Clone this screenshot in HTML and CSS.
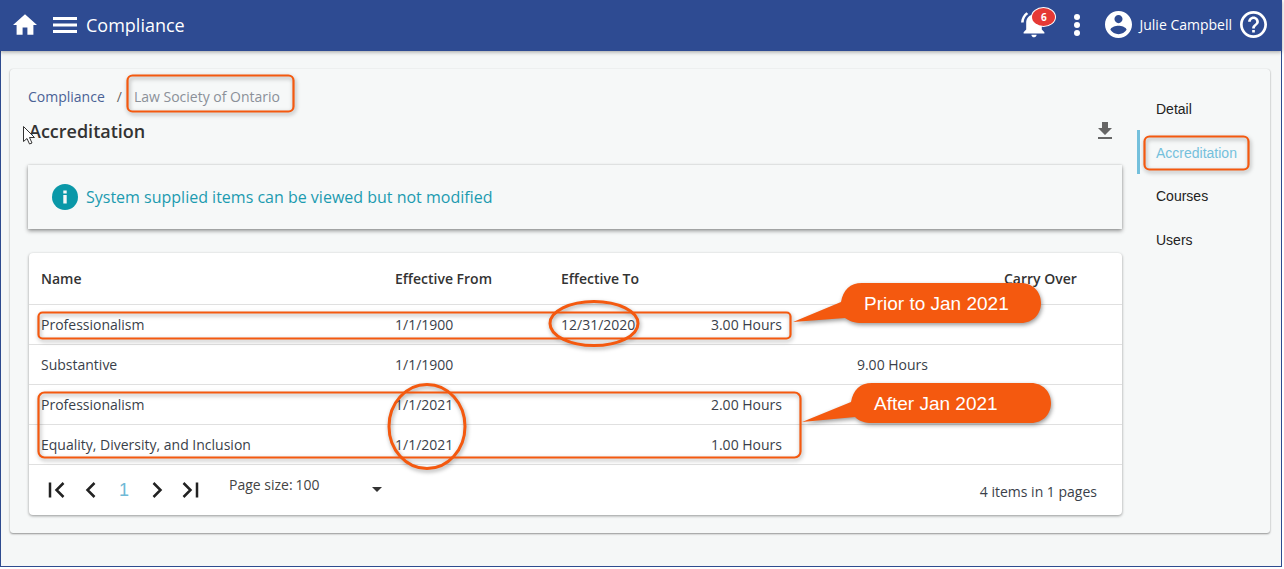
FILE: index.html
```html
<!DOCTYPE html>
<html lang="en">
<head>
<meta charset="utf-8">
<title>Compliance</title>
<link rel="stylesheet" href="styles.css">
</head>
<body>
<div class="window">
  <header class="topbar">
    <svg class="ico home" viewBox="2 1.500 20 17"><path d="M10 20v-6h4v6h5v-8h3L12 3 2 12h3v8z" transform="translate(0 -1.500)"/></svg>
    <svg class="ico menu" viewBox="0 0 24 16"><path d="M0 0h24v3H0zM0 6.500h24v3H0zM0 13h24v3H0z"/></svg>
    <span class="app-title">Compliance</span>
    <span class="spacer"></span>
    <div class="bell-wrap">
      <svg class="ico bell" viewBox="2 2.500 20 20"><path d="M7.580 4.080 6.150 2.650C3.750 4.480 2.170 7.300 2.030 10.500h2c.15-2.650 1.510-4.970 3.550-6.420zM19.970 10.500h2c-.15-3.200-1.730-6.020-4.120-7.850l-1.420 1.430c2.020 1.450 3.390 3.770 3.540 6.420zM18 11c0-3.070-1.640-5.640-4.500-6.320V4c0-.83-.67-1.500-1.500-1.500s-1.500.67-1.500 1.500v.68C7.630 5.360 6 7.920 6 11v5l-2 2v1h16v-1l-2-2v-5zm-6 11c.14 0 .27-.01.4-.04.65-.14 1.180-.58 1.440-1.180.1-.24.15-.5.15-.78h-4c.01 1.100.9 2 2.010 2z"/></svg>
      <span class="badge">6</span>
    </div>
    <svg class="ico kebab" viewBox="0 0 8 24"><circle cx="4" cy="4" r="3"/><circle cx="4" cy="12" r="3"/><circle cx="4" cy="20" r="3"/></svg>
    <svg class="ico avatar" viewBox="2 2 20 20"><path d="M12 2C6.480 2 2 6.480 2 12s4.480 10 10 10 10-4.480 10-10S17.520 2 12 2zm0 3c1.660 0 3 1.340 3 3s-1.340 3-3 3-3-1.340-3-3 1.340-3 3-3zm0 14.200c-2.500 0-4.710-1.280-6-3.220.03-1.990 4-3.080 6-3.080 1.990 0 5.970 1.090 6 3.080-1.290 1.940-3.500 3.220-6 3.220z"/></svg>
    <span class="user">Julie Campbell</span>
    <svg class="ico help" viewBox="2 2 20 20"><path d="M11 18h2v-2h-2v2zm1-16C6.480 2 2 6.480 2 12s4.480 10 10 10 10-4.480 10-10S17.520 2 12 2zm0 18c-4.410 0-8-3.590-8-8s3.590-8 8-8 8 3.590 8 8-3.590 8-8 8zm0-14c-2.210 0-4 1.790-4 4h2c0-1.100.9-2 2-2s2 .9 2 2c0 2-3 1.750-3 5h2c0-2.250 3-2.500 3-5 0-2.210-1.790-4-4-4z"/></svg>
  </header>

  <main class="card">
    <section class="content">
      <nav class="crumbs">
        <a class="crumb-link">Compliance</a>
        <span class="crumb-sep">/</span>
        <span class="crumb-current">Law Society of Ontario</span>
      </nav>
      <div class="title-row">
        <h1 class="page-title">Accreditation</h1>
        <svg class="download" viewBox="5 3 14 17"><path d="M19 9h-4V3H9v6H5l7 7 7-7zM5 18v2h14v-2H5z"/></svg>
      </div>
      <div class="alert">
        <svg class="info" viewBox="0 0 26 26"><circle cx="13" cy="13" r="13"/><path class="info-i" d="M11.300 11h3.400v8.500h-3.400zM11.300 6.500h3.400v3h-3.400z"/></svg>
        <span>System supplied items can be viewed but not modified</span>
      </div>
      <div class="table">
        <div class="row head">
          <div>Name</div><div>Effective From</div><div>Effective To</div><div></div><div></div><div class="carry">Carry Over</div>
        </div>
        <div class="row">
          <div>Professionalism</div><div>1/1/1900</div><div>12/31/2020</div><div class="num">3.00 Hours</div><div></div><div></div>
        </div>
        <div class="row">
          <div>Substantive</div><div>1/1/1900</div><div></div><div></div><div class="num">9.00 Hours</div><div></div>
        </div>
        <div class="row">
          <div>Professionalism</div><div>1/1/2021</div><div></div><div class="num">2.00 Hours</div><div></div><div></div>
        </div>
        <div class="row">
          <div>Equality, Diversity, and Inclusion</div><div>1/1/2021</div><div></div><div class="num">1.00 Hours</div><div></div><div></div>
        </div>
        <div class="pager">
          <svg class="pg pg-wide" viewBox="0 0 18 18"><path d="M2 1.500v15M15.500 2l-7 7 7 7"/></svg>
          <svg class="pg pg-prev" viewBox="0 0 11 18"><path d="M9.500 2l-7 7 7 7"/></svg>
          <span class="pg-num">1</span>
          <svg class="pg pg-next" viewBox="0 0 11 18"><path d="M1.500 2l7 7-7 7"/></svg>
          <svg class="pg pg-wide" viewBox="0 0 18 18"><path d="M2.500 2l7 7-7 7M16 1.500v15"/></svg>
          <div class="size">
            <span class="size-label">Page size:</span>
            <span class="size-val">100</span>
            <span class="caret"></span>
          </div>
          <span class="count">4 items in 1 pages</span>
        </div>
      </div>
    </section>
    <nav class="side">
      <a class="side-item">Detail</a>
      <a class="side-item active">Accreditation</a>
      <a class="side-item">Courses</a>
      <a class="side-item">Users</a>
    </nav>
  </main>
</div>

<svg class="overlay" viewBox="0 0 1284 569" width="1284" height="569">
  <g class="marks">
    <rect x="127.500" y="75.500" width="166" height="36" rx="5"/>
    <rect x="1144.500" y="136.500" width="104" height="33" rx="5"/>
    <rect x="38.500" y="312.500" width="752" height="26" rx="4"/>
    <rect x="38.500" y="392.500" width="762" height="65" rx="6"/>
    <ellipse class="ring" cx="594" cy="323.500" rx="44" ry="22"/>
    <ellipse class="ring" cx="427" cy="426.500" rx="38" ry="42"/>
  </g>
  <g class="bubbles">
    <path d="M793 322 841 302C843 290 850 283 862 283H1021C1033 283 1041 292 1041 303S1033 323 1021 323H862C855 323 849 321 845 318Z"/>
    <path d="M802 422 851 402C853 390 860 383 872 383H1031C1043 383 1051 392 1051 403S1043 423 1031 423H872C865 423 859 421 855 417Z"/>
  </g>
  <text class="bubble-text" x="864" y="310">Prior to Jan 2021</text>
  <text class="bubble-text" x="874" y="410">After Jan 2021</text>
  <path class="cursor" d="M23.500 126.500v15l3.500-3 2.500 5.500 2.500-1-2.500-5.500h5z"/>
</svg>
</body>
</html>
```

FILE: styles.css
```css
* { box-sizing: border-box; }
html, body { margin: 0; padding: 0; background: #fff; }
body { width: 1284px; height: 569px; overflow: hidden; position: relative; font-family: "Open Sans", sans-serif; color: #3a3f4a; }

.window {
  width: 1282px; height: 567px;
  background: #f5f7f7;
  border: 1px solid #2e4b8f; border-top: 0;
}

.topbar {
  height: 51px; margin: 0 -1px;
  background: #2e4b92;
  box-shadow: 0 1px 4px rgba(0,0,0,.35);
  display: flex; align-items: center;
  color: #fff;
  padding: 0 0 2px 13px;
}
.ico { fill: #fff; flex: none; display: block; }
.home { width: 24px; height: 21px; margin-right: 16px; }
.menu { width: 24px; height: 16px; margin-right: 9px; }
.app-title { font-size: 18px; line-height: 24px; }
.spacer { flex: 1; }
.bell-wrap { position: relative; width: 26px; height: 26px; margin-right: 26px; }
.bell { width: 26px; height: 26px; }
.badge {
  position: absolute; left: 11px; top: -4px;
  width: 23px; height: 18px; border-radius: 50%;
  background: #e53935; color: #fff;
  box-shadow: 0 0 0 1px #fff;
  font: 700 10px/18px "Open Sans", sans-serif; text-align: center;
}
.kebab { width: 8px; height: 24px; margin-right: 24px; }
.avatar { width: 27px; height: 27px; margin-right: 7px; }
.user { font-size: 14px; line-height: 20px; margin-right: 8px; }
.help { width: 27px; height: 27px; margin-right: 15px; }

.card {
  width: 1260px; height: 464px;
  margin: 18px 0 0 9px;
  background: #f6f8f8;
  border-radius: 3px;
  box-shadow: 0 1px 2px rgba(0,0,0,.4), 0 0 1px rgba(0,0,0,.15);
  display: flex;
  padding-left: 18px;
}
.content { width: 1094px; padding-top: 17px; }

.crumbs { height: 20px; display: flex; align-items: center; font-size: 14px; }
.crumb-link { color: #4a6296; }
.crumb-sep { color: #666; margin: 0 12px 0 12px; }
.crumb-current { color: #8b9098; font-size: 14px; }

.title-row { height: 30px; margin-top: 10px; display: flex; align-items: center; justify-content: space-between; padding: 0 10px 0 1px; }
.page-title { margin: 0; font-size: 18px; font-weight: 600; color: #333; line-height: 24px; }
.download { width: 14px; height: 17px; fill: #666; position: relative; top: -1px; }

.alert {
  height: 64px; margin-top: 19px;
  background: #f6f8f8;
  box-shadow: 0 2px 4px rgba(0,0,0,.4), 0 0 2px rgba(0,0,0,.15);
  display: flex; align-items: center;
  padding-left: 24px;
  color: #1c9bb0; font-size: 16px;
}
.info { width: 26px; height: 26px; fill: #0a98a8; margin-right: 8px; flex: none; }
.info-i { fill: #f6f8f8; }

.table {
  height: 262px; margin: 24px 0 0 1px;
  background: #fff; border-radius: 4px;
  box-shadow: 0 1px 3px rgba(0,0,0,.4);
  font-size: 14px;
}
.row {
  height: 40px;
  display: grid; grid-template-columns: 354px 166px 120px 125px 145px 1fr;
  align-items: center;
  border-bottom: 1px solid #e0e0e0;
}
.row > div:nth-child(-n+3) { padding-left: 12px; }
.head { height: 52px; font-weight: 600; color: #333; }
.num { text-align: right; padding-right: 12px; }
.num:nth-child(5) { padding-right: 11px; }
.carry { padding-left: 65px; }

.pager { height: 50px; display: flex; align-items: center; padding: 0 25px 0 19px; }
.pg { fill: none; stroke: #222; stroke-width: 2.500; display: block; flex: none; height: 18px; }
.pg-wide { width: 18px; }
.pg-prev, .pg-next { width: 11px; }
.pg-prev { margin-left: 19px; }
.pg-num { width: 55px; padding-left: 1px; text-align: center; color: #6fb9d6; font: 18px "Liberation Sans", sans-serif; }
.pg-next { margin-left: 1px; margin-right: 18px; }
.size { width: 153px; margin-left: 30px; display: flex; align-items: center; height: 20px; position: relative; top: -6px; color: #444; }
.size-val { margin-left: 3px; }
.caret { margin-left: auto; margin-top: 10px; border: 5.500px solid transparent; border-top: 5px solid #333; border-bottom: 0; }
.count { margin-left: auto; position: relative; top: 1px; }

.side { margin-left: 15px; padding-top: 17px; font: 14px/44px "Liberation Sans", sans-serif; color: #222; display: flex; flex-direction: column; }
.side-item { height: 44px; padding-left: 16px; border-left: 3px solid transparent; }
.side-item:nth-child(-n+2) { line-height: 46px; }
.side-item.active { color: #74c0dc; border-left-color: #74c0dc; }

.overlay { position: absolute; left: 0; top: 0; pointer-events: none; }
.marks { fill: none; stroke: #f4590f; stroke-width: 2.200; filter: drop-shadow(1px 2px 2px rgba(0,0,0,.35)); }
.ring { stroke-width: 3; }
.bubbles { fill: #f4590f; filter: drop-shadow(1px 2px 2px rgba(0,0,0,.4)); }
.bubble-text { fill: #fff; font: 19px "Liberation Sans", sans-serif; }
.cursor { fill: #fff; stroke: #333; stroke-width: 1; }
```
